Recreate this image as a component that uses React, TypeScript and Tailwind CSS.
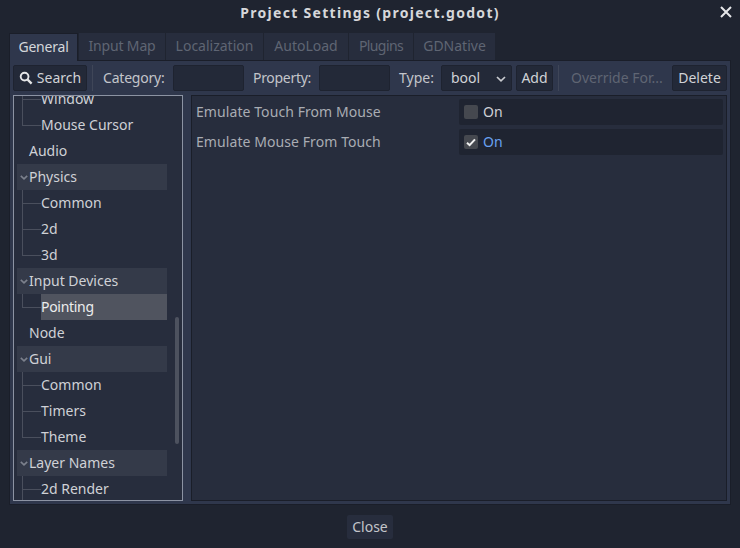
import React from "react";

const font = { fontFamily: '"Noto Sans", sans-serif' };

function Tab({ label, active, w, track }: { label: string; active?: boolean; w: string; track: string }) {
  return (
    <div
      className={`${w} ${track} flex items-center justify-center text-[14px] pb-[2px] ${
        active
          ? "h-[28px] relative z-10 bg-[#2f374c] text-[#d4d6da] border-t border-l border-r border-[#1a1e29]"
          : "h-[27px] bg-[#272d3d] text-[#5f6573]"
      }`}
    >
      {label}
    </div>
  );
}

function Btn({ children, w, className = "" }: { children: React.ReactNode; w: string; className?: string }) {
  return (
    <div className={`${w} h-[26px] flex items-center justify-center bg-[#232938] border border-[#1e2330] rounded-[2px] text-[14px] text-[#d0d2d6] pb-[2px] ${className}`}>
      {children}
    </div>
  );
}

function Input({ w }: { w: string }) {
  return <div className={`${w} h-[26px] bg-[#232938] border border-[#1e2330] rounded-[2px]`} />;
}

const Chevron = () => (
  <svg width="8" height="5" viewBox="0 0 8 5" className="absolute left-[3px] top-[11px]">
    <path d="M0.8 0.8 L4 3.8 L7.2 0.8" fill="none" stroke="#7c818d" strokeWidth="1.6" />
  </svg>
);

function Head({ label, x = 12 }: { label: string; x?: number }) {
  return (
    <div className="relative h-[26px] w-[150px] bg-[#343a49] flex items-center text-[#cfd1d6] text-[14px] pb-[2px]">
      <Chevron />
      <span style={{ marginLeft: x }}>{label}</span>
    </div>
  );
}

function Top({ label }: { label: string }) {
  return <div className="h-[26px] w-[150px] flex items-center pl-[12px] pb-[2px] text-[#cfd1d6] text-[14px]">{label}</div>;
}

function Child({ label, last, selected }: { label: string; last?: boolean; selected?: boolean }) {
  return (
    <div className="relative h-[26px] w-[150px] text-[14px]">
      <span className={`absolute left-[5px] top-0 w-px bg-[#4a4f5d] ${last ? "h-[13px]" : "h-[26px]"}`} />
      <span className="absolute left-[5px] top-[13px] w-[19px] h-px bg-[#4a4f5d]" />
      <div className={`ml-[24px] h-[26px] flex items-center pb-[2px] ${selected ? "bg-[#50545f] text-[#eceded] tracking-[-0.3px]" : "text-[#cfd1d6]"}`}>{label}</div>
    </div>
  );
}

function Prop({ label, checked }: { label: string; checked?: boolean }) {
  return (
    <div className="flex items-center h-[26px]">
      <div className="w-[267px] pl-[4px] pb-[2px] text-[14px] tracking-[0.08px] text-[#a9acb3]">{label}</div>
      <div className="flex-1 h-[26px] bg-[#1f2431] rounded-[2px] flex items-center pl-[5px] gap-[5px] text-[14px] mr-[3px]">
        <div className="w-[14px] h-[14px] rounded-[2px] bg-[#45484f] flex items-center justify-center">
          {checked && (
            <svg width="10" height="9" viewBox="0 0 10 9">
              <path d="M1 4.8 L3.6 7.2 L9 1.4" fill="none" stroke="#f0f0f0" strokeWidth="2" />
            </svg>
          )}
        </div>
        <span className={`pb-[2px] ${checked ? "text-[#69a1f0]" : "text-[#cfd1d6]"}`}>On</span>
      </div>
    </div>
  );
}

export default function App() {
  return (
    <div style={font} className="relative w-[740px] h-[548px] bg-[#1f2430] flex flex-col overflow-hidden">
      <div className="h-[33px] shrink-0 flex items-center justify-center text-[14px] font-bold tracking-[1.3px] text-[#d6d7da] pb-[9px]">
        Project Settings (project.godot)
      </div>
      <svg width="12" height="12" viewBox="0 0 12 12" className="absolute left-[720px] top-[6px]">
        <path d="M1 1 L11 11 M11 1 L1 11" stroke="#e6e7e9" strokeWidth="2" />
      </svg>

      <div className="flex ml-[9px] gap-px h-[27px] shrink-0">
        <Tab label="General" active w="w-[69px]" track="tracking-[-0.2px]" />
        <Tab label="Input Map" w="w-[86px]" track="tracking-[-0.15px]" />
        <Tab label="Localization" w="w-[97px]" track="tracking-[0px]" />
        <Tab label="AutoLoad" w="w-[84px]" track="tracking-[0px]" />
        <Tab label="Plugins" w="w-[64px]" track="tracking-[-0.6px]" />
        <Tab label="GDNative" w="w-[81px]" track="tracking-[0px]" />
      </div>

      <div className="mx-[9px] w-[722px] h-[445px] shrink-0 bg-[#2f374c] border border-[#1a1e29] px-[3px] pt-[4px] flex flex-col">
        <div className="flex items-center h-[26px] shrink-0 text-[14px] text-[#c3c5ca]">
          <Btn w="w-[74px]" className="gap-[4px]">
            <svg width="14" height="14" viewBox="0 0 14 14" className="mt-[2px]">
              <circle cx="5.6" cy="5.6" r="3.9" fill="none" stroke="#e4e5e7" strokeWidth="1.9" />
              <path d="M8.6 8.6 L12.6 12.6" stroke="#e4e5e7" strokeWidth="2.3" />
            </svg>
            <span>Search</span>
          </Btn>
          <div className="w-px h-[26px] bg-[#3f4658] ml-[5px]" />
          <span className="ml-[10px] w-[70px] pb-[2px] tracking-[-0.2px]">Category:</span>
          <Input w="w-[71px]" />
          <span className="ml-[9px] w-[66px] pb-[2px] tracking-[-0.3px]">Property:</span>
          <Input w="w-[71px]" />
          <span className="ml-[9px] w-[42px] pb-[2px]">Type:</span>
          <div className="w-[71px] h-[26px] bg-[#232938] border border-[#1e2330] rounded-[2px] flex items-center pl-[9px] pb-[2px] text-[#d0d2d6] relative">
            bool
            <svg width="10" height="6" viewBox="0 0 10 6" className="absolute right-[5px] top-[10px]">
              <path d="M1 1 L5 4.8 L9 1" fill="none" stroke="#c9cbd0" strokeWidth="1.7" />
            </svg>
          </div>
          <Btn w="w-[37px]" className="ml-[4px]">Add</Btn>
          <div className="w-px h-[26px] bg-[#3f4658] ml-[5px]" />
          <span className="ml-[12px] w-[96px] pb-[2px] text-[#5f6573] whitespace-nowrap">Override For...</span>
          <Btn w="w-[55px]" className="ml-[5px]">Delete</Btn>
        </div>

        <div className="flex gap-[8px] mt-[4px] h-[406px] shrink-0">
          <div className="relative w-[170px] h-[406px] shrink-0 border border-[#8c93a3] bg-[#272d3d] overflow-hidden pl-[3px]">
            <div className="-mt-[10px]">
              <Child label="Window" />
              <Child label="Mouse Cursor" last />
              <Top label="Audio" />
              <Head label="Physics" />
              <Child label="Common" />
              <Child label="2d" />
              <Child label="3d" last />
              <Head label="Input Devices" />
              <Child label="Pointing" last selected />
              <Top label="Node" />
              <Head label="Gui" />
              <Child label="Common" />
              <Child label="Timers" />
              <Child label="Theme" last />
              <Head label="Layer Names" />
              <Child label="2d Render" />
            </div>
            <div className="absolute left-[161px] top-[221px] w-[4px] h-[127px] rounded-full bg-[#4d525f]" />
          </div>
          <div className="flex-1 h-[406px] bg-[#272d3d] border border-[#1a1e29] pt-[3px] flex flex-col gap-[4px]">
            <Prop label="Emulate Touch From Mouse" />
            <Prop label="Emulate Mouse From Touch" checked />
          </div>
        </div>
      </div>

      <div className="flex justify-center mt-[10px]">
        <div className="w-[46px] h-[24px] bg-[#272d3d] rounded-[2px] flex items-center justify-center pb-[2px] text-[14px] text-[#c3c5ca]">Close</div>
      </div>
    </div>
  );
}
